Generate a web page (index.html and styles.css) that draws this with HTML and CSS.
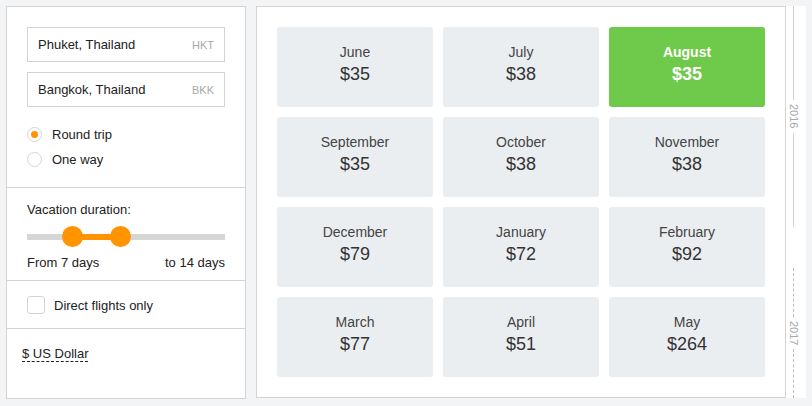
FILE: index.html
```html
<!DOCTYPE html>
<html lang="en">
<head>
<meta charset="UTF-8">
<title>Cheap flights calendar</title>
<link rel="stylesheet" href="styles.css">
</head>
<body>

<div class="page">

  <div class="filters">

    <div class="section route">
      <div class="field">
        <span class="city">Phuket, Thailand</span>
        <span class="code">HKT</span>
      </div>
      <div class="field">
        <span class="city">Bangkok, Thailand</span>
        <span class="code">BKK</span>
      </div>

      <div class="radios">
        <label class="radio checked"><span class="dot"></span>Round trip</label>
        <label class="radio"><span class="dot"></span>One way</label>
      </div>
    </div>

    <div class="section duration">
      <div class="title">Vacation duration:</div>
      <div class="slider">
        <div class="track"></div>
        <div class="fill"></div>
        <div class="thumb thumb-from"></div>
        <div class="thumb thumb-to"></div>
      </div>
      <div class="range-labels">
        <span>From 7 days</span>
        <span>to 14 days</span>
      </div>
    </div>

    <div class="section direct">
      <label class="checkbox"><span class="box"></span>Direct flights only</label>
    </div>

    <div class="section currency">
      <span class="currency-link">$ US Dollar</span>
    </div>

  </div>

  <div class="months">
    <div class="month"><div class="name">June</div><div class="price">$35</div></div>
    <div class="month"><div class="name">July</div><div class="price">$38</div></div>
    <div class="month best"><div class="name">August</div><div class="price">$35</div></div>
    <div class="month"><div class="name">September</div><div class="price">$35</div></div>
    <div class="month"><div class="name">October</div><div class="price">$38</div></div>
    <div class="month"><div class="name">November</div><div class="price">$38</div></div>
    <div class="month"><div class="name">December</div><div class="price">$79</div></div>
    <div class="month"><div class="name">January</div><div class="price">$72</div></div>
    <div class="month"><div class="name">February</div><div class="price">$92</div></div>
    <div class="month"><div class="name">March</div><div class="price">$77</div></div>
    <div class="month"><div class="name">April</div><div class="price">$51</div></div>
    <div class="month"><div class="name">May</div><div class="price">$264</div></div>
  </div>

  <div class="years">
    <div class="year year-2016">
      <div class="line"></div>
      <div class="year-label">2016</div>
      <div class="line"></div>
    </div>
    <div class="year year-2017">
      <div class="line"></div>
      <div class="year-label">2017</div>
      <div class="line"></div>
    </div>
  </div>

</div>

</body>
</html>
```

FILE: styles.css
```css
body {
  font-family: "Liberation Sans", Arial, sans-serif;
  margin: 0;
  padding: 0;
  background: #f3f4f6;
  color: #222;
  font-size: 13px;
}

.page {
  display: flex;
  align-items: flex-start;
  padding: 6px;
}

.filters {
  width: 238px;
  height: 391px;
  background: #fff;
  border: 1px solid #d3d3d3;
  display: flex;
  flex-direction: column;
}

.section {
  padding: 0 20px;
  border-bottom: 1px solid #d3d3d3;
}

.section:last-child {
  border-bottom: none;
  flex: 1;
}

.route {
  padding-top: 20px;
  padding-bottom: 20px;
}

.field {
  height: 33px;
  border: 1px solid #d3d3d3;
  display: flex;
  align-items: center;
  justify-content: space-between;
  padding: 0 10px;
  margin-bottom: 10px;
}

.city {
  font-size: 13px;
  color: #222;
}

.code {
  font-size: 11px;
  color: #a8a8a8;
}

.radios {
  margin-top: 20px;
  display: flex;
  flex-direction: column;
  gap: 10px;
}

.radio {
  display: flex;
  align-items: center;
  height: 15px;
}

.radio .dot {
  width: 13px;
  height: 13px;
  border: 1px solid #d6d6d6;
  border-radius: 50%;
  margin-right: 10px;
  display: flex;
  align-items: center;
  justify-content: center;
}

.radio.checked .dot::after {
  content: "";
  width: 7px;
  height: 7px;
  border-radius: 50%;
  background: #ff9400;
}

.duration {
  padding-top: 14px;
  padding-bottom: 9px;
}

.title {
  line-height: 16px;
}

.slider {
  position: relative;
  height: 22px;
  margin-top: 8px;
}

.track {
  position: absolute;
  left: 0;
  right: 0;
  top: 8px;
  height: 6px;
  background: #d6d6d6;
}

.fill {
  position: absolute;
  left: 45px;
  width: 48px;
  top: 8px;
  height: 6px;
  background: #ff9400;
}

.thumb {
  position: absolute;
  top: 0;
  width: 21px;
  height: 21px;
  border-radius: 50%;
  background: #ff9400;
}

.thumb-from {
  left: 35px;
}

.thumb-to {
  left: 83px;
}

.range-labels {
  display: flex;
  justify-content: space-between;
  line-height: 16px;
  margin-top: 7px;
}

.direct {
  padding-top: 15px;
  padding-bottom: 14px;
}

.checkbox {
  display: flex;
  align-items: center;
}

.checkbox .box {
  width: 16px;
  height: 16px;
  border: 1px solid #d3d3d3;
  border-radius: 3px;
  margin-right: 9px;
}

.currency {
  padding: 17px 15px 0;
}

.currency-link {
  line-height: 16px;
  border-bottom: 1px dashed #222;
}

.months {
  margin-left: 10px;
  width: 488px;
  height: 350px;
  padding: 20px;
  background: #fff;
  border: 1px solid #d3d3d3;
  display: grid;
  grid-template-columns: repeat(3, 156px);
  grid-auto-rows: 80px;
  gap: 10px;
}

.month {
  background: #ebeef1;
  border-radius: 3px;
  display: flex;
  flex-direction: column;
  align-items: center;
  justify-content: center;
  padding-bottom: 6px;
  color: #333;
}

.month .name {
  font-size: 14px;
  line-height: 18px;
  color: #444;
}

.month .price {
  font-size: 18px;
  line-height: 24px;
  margin-top: 1px;
}

.month.best {
  background: #6fc94a;
  color: #fff;
}

.month.best .name {
  color: #fff;
  font-weight: bold;
}

.month.best .price {
  font-weight: bold;
}

.years {
  width: 20px;
  height: 392px;
  background: #fff;
  display: flex;
  flex-direction: column;
}

.year {
  display: flex;
  flex-direction: column;
  align-items: flex-start;
  padding-left: 7px;
}

.year-2016 {
  height: 221px;
}

.year-2017 {
  margin-top: 41px;
  flex: 1;
}

.line {
  flex: 1;
  border-left: 1px solid #cfcfcf;
}

.year-2017 .line {
  border-left: 1px dashed #bdbdbd;
}

.year-label {
  writing-mode: vertical-rl;
  font-size: 11px;
  line-height: 13px;
  color: #a8a8a8;
  padding: 4px 0;
  margin-left: -6px;
}
```
